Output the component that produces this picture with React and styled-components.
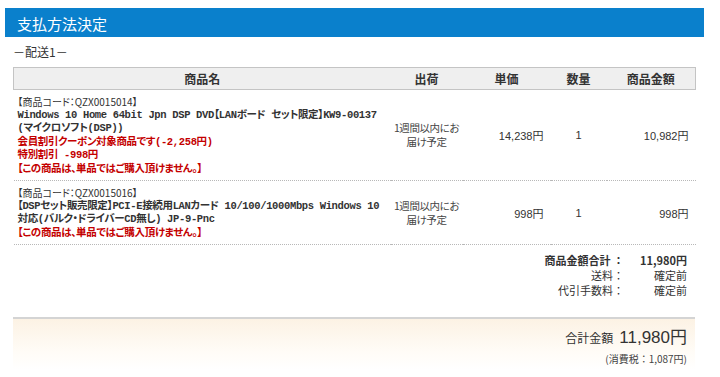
import React from 'react';
import styled, { createGlobalStyle } from 'styled-components';

const items = [
  {
    code: 'QZX0015014',
    name: [
      'Windows 10 Home 64bit Jpn DSP DVD【LANボード セット限定】KW9-00137',
      '(マイクロソフト(DSP))',
    ],
    notes: [
      '会員割引クーポン対象商品です(-2,258円)',
      '特別割引 -998円',
      '【この商品は、単品ではご購入頂けません。】',
    ],
    price: '14,238円',
    qty: 1,
    amount: '10,982円',
  },
  {
    code: 'QZX0015016',
    name: [
      '【DSPセット販売限定】PCI-E接続用LANカード 10/100/1000Mbps Windows 10',
      '対応(バルク・ドライバーCD無し) JP-9-Pnc',
    ],
    notes: ['【この商品は、単品ではご購入頂けません。】'],
    price: '998円',
    qty: 1,
    amount: '998円',
  },
];

const columns = [
  { label: '商品名', width: 377 },
  { label: '出荷', width: 72 },
  { label: '単価', width: 88 },
  { label: '数量', width: 56 },
  { label: '商品金額', width: 89 },
];

const fees = [
  { label: '商品金額合計 ：', value: '11,980円', strong: true },
  { label: '送料：', value: '確定前' },
  { label: '代引手数料：', value: '確定前' },
];

const GlobalStyle = createGlobalStyle`
  body {
    margin: 0;
    background: #fff;
    color: #333;
    font-family: "Liberation Sans", "Noto Sans CJK JP", sans-serif;
  }
`;

const Section = styled.section`
  width: 699px;
  margin-left: 5px;
  padding-top: 8px;
`;

const TitleBar = styled.h2`
  margin: 0;
  height: 29px;
  padding-left: 12px;
  background: #0a80cc;
  color: #fff;
  font-family: "Noto Sans CJK JP", sans-serif;
  font-size: 15px;
  font-weight: 400;
  line-height: 31px;
`;

const Body = styled.div`
  padding: 0 9px 0 8px;
`;

const ShipLabel = styled.p`
  margin: 0;
  height: 30px;
  font-family: "Noto Sans CJK JP", sans-serif;
  font-size: 12px;
  line-height: 30px;
  color: #333;
`;

const Table = styled.table`
  width: 100%;
  border-collapse: collapse;
  table-layout: fixed;
`;

const Th = styled.th`
  height: 21px;
  padding: 0;
  background: #efefef;
  border-top: 1px solid #c4c4c4;
  border-bottom: 1px solid #c4c4c4;
  border-left: ${({ $first }) => ($first ? '1px solid #c4c4c4' : 'none')};
  border-right: ${({ $last }) => ($last ? '1px solid #c4c4c4' : 'none')};
  font-family: "Noto Sans CJK JP", sans-serif;
  font-size: 12px;
  font-weight: 700;
  color: #333;
  text-align: center;
`;

const Td = styled.td`
  padding: ${({ $product }) => ($product ? '5px 4px 4px' : '0 2px')};
  border-bottom: 1px dotted #b8b8b8;
  vertical-align: middle;
  text-align: ${({ $align }) => $align || 'center'};
  padding-right: ${({ $align }) => ($align === 'right' ? '7px' : undefined)};
  font-size: 11px;
  color: #333;
`;

const Line = styled.div`
  white-space: nowrap;
  line-height: 13.5px;
  font-family: ${({ $mono }) =>
    $mono ? '"Liberation Mono", "Noto Sans CJK JP", monospace' : '"Noto Sans CJK JP", sans-serif'};
  font-size: ${({ $mono }) => ($mono ? '10.5px' : '10px')};
  letter-spacing: ${({ $mono }) => ($mono ? '-0.35px' : '0')};
  font-weight: ${({ $bold }) => ($bold ? 700 : 400)};
  font-feature-settings: "palt";
  color: ${({ $red }) => ($red ? '#c40000' : '#333')};
`;

const Ship = styled.div`
  white-space: nowrap;
  font-family: "Noto Sans CJK JP", sans-serif;
  font-size: 10.5px;
  letter-spacing: -0.4px;
  line-height: 14px;
  font-feature-settings: "palt";
  color: #444;
`;

const Summary = styled.dl`
  display: grid;
  grid-template-columns: auto 63px;
  justify-content: end;
  margin: 8px 8px 0 0;
  font-family: "Noto Sans CJK JP", sans-serif;
  font-size: 11px;
  line-height: 15px;
  color: #333;
`;

const FeeLabel = styled.dt`
  text-align: right;
  font-weight: ${({ $strong }) => ($strong ? 700 : 400)};
`;

const FeeValue = styled.dd`
  margin: 0;
  text-align: right;
  font-weight: ${({ $strong }) => ($strong ? 700 : 400)};
`;

const TotalBand = styled.div`
  margin-top: 19px;
  padding: 4px 8px 4px 0;
  border-top: 2px solid #d4d4d4;
  background: linear-gradient(#fcf2e4, #fffcf7 65%, #fff);
  text-align: right;
  color: #333;
`;

const GrandTotal = styled.div`
  height: 24px;
  display: flex;
  justify-content: flex-end;
  align-items: baseline;
  gap: 6px;
  font-family: "Noto Sans CJK JP", sans-serif;
  font-size: 12px;
`;

const GrandValue = styled.span`
  font-family: "Liberation Sans", "Noto Sans CJK JP", sans-serif;
  font-size: 17px;
`;

const Tax = styled.div`
  margin-top: 4px;
  font-family: "Noto Sans CJK JP", sans-serif;
  font-size: 10px;
  color: #444;
`;

export default function App() {
  return (
    <>
      <GlobalStyle />
      <Section>
        <TitleBar>支払方法決定</TitleBar>
        <Body>
          <ShipLabel>－配送1－</ShipLabel>
          <Table>
            <colgroup>
              {columns.map(col => (
                <col key={col.label} style={{ width: col.width }} />
              ))}
            </colgroup>
            <thead>
              <tr>
                {columns.map((col, i) => (
                  <Th key={col.label} $first={i === 0} $last={i === columns.length - 1}>
                    {col.label}
                  </Th>
                ))}
              </tr>
            </thead>
            <tbody>
              {items.map(item => (
                <tr key={item.code}>
                  <Td $product $align="left">
                    <Line>【商品コード：{item.code}】</Line>
                    {item.name.map(l => (
                      <Line key={l} $mono $bold>
                        {l}
                      </Line>
                    ))}
                    {item.notes.map(l => (
                      <Line key={l} $mono $bold $red>
                        {l}
                      </Line>
                    ))}
                  </Td>
                  <Td>
                    <Ship>
                      1週間以内にお
                      <br />
                      届け予定
                    </Ship>
                  </Td>
                  <Td $align="right">{item.price}</Td>
                  <Td>{item.qty}</Td>
                  <Td $align="right">{item.amount}</Td>
                </tr>
              ))}
            </tbody>
          </Table>
          <Summary>
            {fees.map(f => (
              <React.Fragment key={f.label}>
                <FeeLabel $strong={f.strong}>{f.label}</FeeLabel>
                <FeeValue $strong={f.strong}>{f.value}</FeeValue>
              </React.Fragment>
            ))}
          </Summary>
          <TotalBand>
            <GrandTotal>
              合計金額<GrandValue>11,980円</GrandValue>
            </GrandTotal>
            <Tax>(消費税：1,087円)</Tax>
          </TotalBand>
        </Body>
      </Section>
    </>
  );
}
